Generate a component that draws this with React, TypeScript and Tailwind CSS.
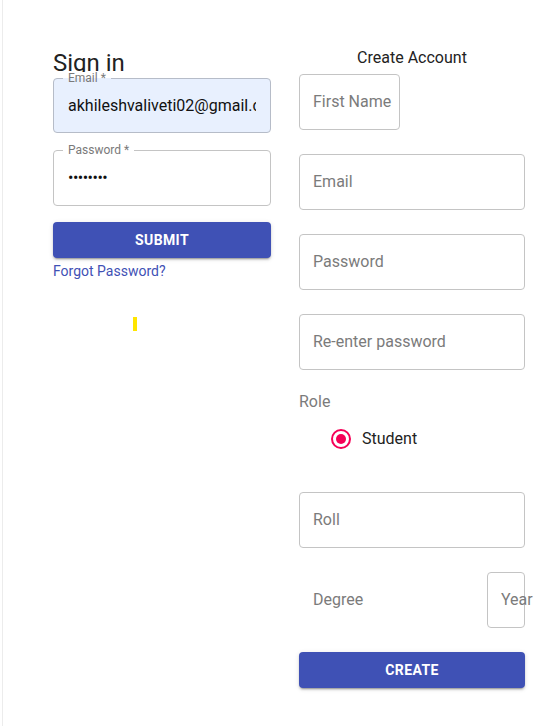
import React from "react";

const font = { fontFamily: "Roboto, 'Noto Sans', sans-serif" };

function Outlined({ placeholder, className = "" }: { placeholder: string; className?: string }) {
  return (
    <div className={`h-[56px] rounded-[4px] border border-[#c4c4c4] flex items-center pl-[13px] whitespace-nowrap ${className}`}>
      <span className="text-[16px] text-[#7b7b7b]">{placeholder}</span>
    </div>
  );
}

export default function App() {
  return (
    <div style={font} className="min-h-[726px] bg-white">
      <div className="ml-[2px] min-h-[726px] border-l border-[#ececec] flex pl-[50px] pt-[45px]">
        {/* Sign in column */}
        <div className="w-[218px] flex flex-col pt-[4px]">
          <h1 className="text-[24px] leading-[28px] text-[#222] font-normal">Sign in</h1>
          <div className="relative mt-[1px] h-[55px] rounded-[4px] border border-[#b6bcc8] bg-[#e8f0fe] flex items-center pl-[14px] pr-[14px]">
            <span className="absolute left-[9px] -top-[7px] px-[5px] text-[12px] leading-[12px] text-[#7a7a7a] bg-[linear-gradient(to_bottom,white_50%,#e8f0fe_50%)]">
              Email *
            </span>
            <span className="block overflow-hidden whitespace-nowrap text-[16px] text-[#111]">
              akhileshvaliveti02@gmail.com
            </span>
          </div>
          <div className="relative mt-[17px] h-[56px] rounded-[4px] border border-[#c4c4c4] flex items-center pl-[14px]">
            <span className="absolute left-[9px] -top-[7px] px-[5px] text-[12px] leading-[12px] text-[#7a7a7a] bg-white">
              Password *
            </span>
            <span className="text-[16px] tracking-[-0.5px] text-[#111]">••••••••</span>
          </div>
          <button className="mt-[16px] h-[36px] rounded-[4px] bg-[#3f51b5] text-white text-[14px] font-bold tracking-[0.4px] shadow-[0_3px_1px_-2px_rgba(0,0,0,0.2),0_2px_2px_0_rgba(0,0,0,0.14),0_1px_5px_0_rgba(0,0,0,0.12)]">
            SUBMIT
          </button>
          <a className="mt-[3px] text-[14px] leading-[20px] text-[#3f51b5]">Forgot Password?</a>
          <div className="mt-[36px] ml-[80px] w-[4px] h-[14px] bg-[#ffe500]" />
        </div>

        {/* Create account column */}
        <div className="ml-[28px] w-[226px] flex flex-col pt-[1px]">
          <div className="text-center text-[16px] leading-[24px] text-[#222]">Create Account</div>
          <Outlined placeholder="First Name" className="mt-[4px] w-[101px] overflow-hidden" />
          <Outlined placeholder="Email" className="mt-[24px]" />
          <Outlined placeholder="Password" className="mt-[24px]" />
          <Outlined placeholder="Re-enter password" className="mt-[24px]" />
          <div className="mt-[20px] text-[16px] leading-[24px] text-[#7b7b7b]">Role</div>
          <div className="mt-[4px] h-[42px] flex items-center pl-[21px]">
            <div className="p-[9px]">
              <svg width="24" height="24" viewBox="0 0 24 24">
                <circle cx="12" cy="12" r="9" fill="none" stroke="#f50057" strokeWidth="2" />
                <circle cx="12" cy="12" r="5" fill="#f50057" />
              </svg>
            </div>
            <span className="text-[16px] text-[#222]">Student</span>
          </div>
          <Outlined placeholder="Roll" className="mt-[32px]" />
          <div className="mt-[24px] h-[56px] flex justify-between">
            <span className="self-center pl-[14px] text-[16px] text-[#7b7b7b]">Degree</span>
            <div className="w-[38px] h-[56px] rounded-[4px] border border-[#c4c4c4] flex items-center pl-[13px] whitespace-nowrap">
              <span className="text-[16px] text-[#7b7b7b]">Year</span>
            </div>
          </div>
          <button className="mt-[24px] h-[36px] rounded-[4px] bg-[#3f51b5] text-white text-[14px] font-bold tracking-[0.4px] shadow-[0_3px_1px_-2px_rgba(0,0,0,0.2),0_2px_2px_0_rgba(0,0,0,0.14),0_1px_5px_0_rgba(0,0,0,0.12)]">
            CREATE
          </button>
        </div>
      </div>
    </div>
  );
}
